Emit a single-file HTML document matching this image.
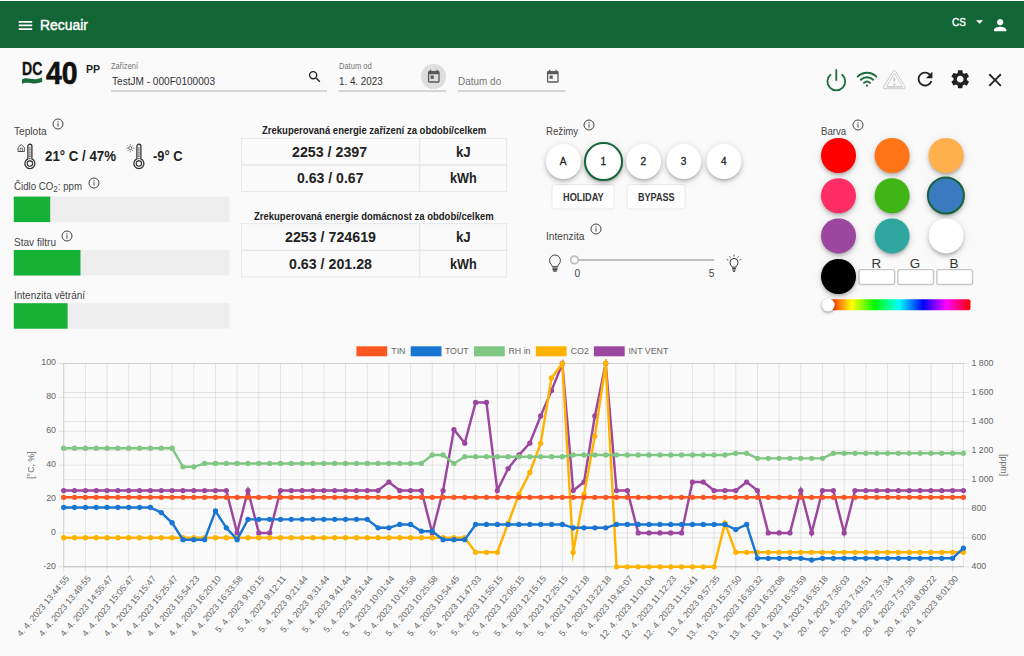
<!DOCTYPE html><html lang="cs"><head><meta charset="utf-8"><title>Recuair</title><style>
html,body{margin:0;padding:0}body{width:1024px;height:656px;overflow:hidden;background:#fafafa;font-family:"Liberation Sans", sans-serif;position:relative}
.t{position:absolute;white-space:pre;line-height:normal;transform-origin:0 50%}
.ic{position:absolute;display:block;overflow:visible}
.abs{position:absolute}
.bar{position:absolute;left:13.8px;width:216px;height:25.6px;background:#eee}
.bar i{position:absolute;left:0;top:0;bottom:0;background:#14b135;display:block}
.cell{position:absolute;border:1px solid #e4e7ea;box-sizing:border-box}
.mode{position:absolute;width:34.6px;height:34.6px;border-radius:50%;background:#fff;box-shadow:0 2px 3px -1px rgba(0,0,0,.2),0 3px 5px 0 rgba(0,0,0,.14),0 1px 9px 0 rgba(0,0,0,.10);box-sizing:border-box}
.btn{position:absolute;height:24.6px;background:#fff;border:1px solid #e6e6e6;border-radius:3px;box-sizing:border-box}
.col{position:absolute;width:34.6px;height:34.6px;border-radius:50%;box-sizing:border-box;box-shadow:0 2px 3px -1px rgba(0,0,0,.2),0 3px 5px 0 rgba(0,0,0,.14),0 1px 9px 0 rgba(0,0,0,.10)}
.inp{position:absolute;top:269.9px;width:35.8px;height:14.4px;background:#fff;border:1px solid #c4c4c4;border-radius:2px;box-sizing:border-box;box-shadow:inset 0 1px 1px rgba(0,0,0,.08)}

</style></head><body>
<svg class="ic" style="left:0;top:0;z-index:0" width="1024" height="340" viewBox="0 0 1024 340"><rect x="111" y="90.3" width="215.9" height="1.45" fill="#c6c6c6"/><rect x="338.3" y="90.3" width="107.9" height="1.45" fill="#c6c6c6"/><rect x="457.9" y="90.3" width="107.8" height="1.45" fill="#c6c6c6"/><rect x="13.8" y="196.6" width="215.9" height="25.5" fill="#eee"/><rect x="13.8" y="196.6" width="36.4" height="25.5" fill="#14b135"/><rect x="13.8" y="250.0" width="215.9" height="25.5" fill="#eee"/><rect x="13.8" y="250.0" width="66.7" height="25.5" fill="#14b135"/><rect x="13.8" y="303.2" width="215.9" height="25.5" fill="#eee"/><rect x="13.8" y="303.2" width="53.8" height="25.5" fill="#14b135"/><rect x="241.5" y="138.40" width="178.2" height="26.6" fill="none" stroke="#e2e6ea" stroke-width="0.9"/><rect x="419.7" y="138.40" width="86.9" height="26.6" fill="none" stroke="#e2e6ea" stroke-width="0.9"/><rect x="241.5" y="165.00" width="178.2" height="26.6" fill="none" stroke="#e2e6ea" stroke-width="0.9"/><rect x="419.7" y="165.00" width="86.9" height="26.6" fill="none" stroke="#e2e6ea" stroke-width="0.9"/><rect x="241.5" y="223.70" width="178.2" height="26.6" fill="none" stroke="#e2e6ea" stroke-width="0.9"/><rect x="419.7" y="223.70" width="86.9" height="26.6" fill="none" stroke="#e2e6ea" stroke-width="0.9"/><rect x="241.5" y="250.30" width="178.2" height="26.6" fill="none" stroke="#e2e6ea" stroke-width="0.9"/><rect x="419.7" y="250.30" width="86.9" height="26.6" fill="none" stroke="#e2e6ea" stroke-width="0.9"/><rect x="552.0" y="184.6" width="62.1" height="24.4" rx="2.8" fill="#fff" stroke="#e9e9e9" stroke-width="1"/><rect x="627.1" y="184.6" width="58.1" height="24.4" rx="2.8" fill="#fff" stroke="#e9e9e9" stroke-width="1"/><rect x="858.95" y="269.65" width="35.70" height="14.90" rx="2" fill="#fff" stroke="#c6c6c6" stroke-width="1.4"/><rect x="897.85" y="269.65" width="35.70" height="14.90" rx="2" fill="#fff" stroke="#c6c6c6" stroke-width="1.4"/><rect x="936.85" y="269.65" width="35.70" height="14.90" rx="2" fill="#fff" stroke="#c6c6c6" stroke-width="1.4"/></svg>
<div class="abs" style="left:0;top:0;width:1024px;height:2px;background:linear-gradient(#f6f8f7 0,#f6f8f7 55%,#126534 100%)"></div>
<header class="abs" style="left:0;top:1px;width:1024px;height:46.6px;background:#126534"></header>
<svg class="ic" style="left:0;top:0" width="40" height="40" viewBox="0 0 40 40"><path d="M18.7 20.9h13.5v1.75h-13.5zM18.7 24.6h13.5v1.75h-13.5zM18.7 28.25h13.5v1.75h-13.5z" fill="#fff"/></svg>
<span class="t" id="recuair" style="left:40.1px;top:15.84px;font-size:15.2px;font-weight:400;color:#fff;transform:scaleX(0.9170);-webkit-text-stroke:0.45px #fff;">Recuair</span>
<span class="t" id="cs" style="left:951.6px;top:15.83px;font-size:10.8px;font-weight:400;color:#fff;transform:scaleX(0.9333);-webkit-text-stroke:0.35px #fff;">CS</span>
<svg class="ic" style="left:970.9px;top:12.9px" width="17.2" height="17.2" viewBox="0 0 24 24"><path d="M7 10l5 5 5-5z" fill="#fff"/></svg>
<svg class="ic" style="left:990.9px;top:16.2px" width="18.4" height="18.4" viewBox="0 0 24 24"><path d="M12 12c2.21 0 4-1.79 4-4s-1.79-4-4-4-4 1.79-4 4 1.79 4 4 4zm0 2c-2.67 0-8 1.34-8 4v2h16v-2c0-2.66-5.33-4-8-4z" fill="#fff"/></svg>
<span class="t" id="dc" style="left:21.6px;top:58.67px;font-size:17.6px;font-weight:700;color:#111;transform:scaleX(0.8025);-webkit-text-stroke:0.3px #111;">DC</span>
<svg class="ic" style="left:21.8px;top:76.9px" width="20.2" height="7.6" viewBox="0 0 21 7" preserveAspectRatio="none"><path d="M0 2.2C3 0.6 6 1.4 10 1.9C14 2.4 17 1.6 21 0.4V4.6C17 5.6 14 6.2 10 5.7C6 5.2 3 5 0 6.4Z" fill="#1a6b3a"/></svg>
<span class="t" id="n40" style="left:46.2px;top:55.91px;font-size:30.6px;font-weight:700;color:#111;transform:scaleX(0.9286);-webkit-text-stroke:0.6px #111;">40</span>
<span class="t" id="pp" style="left:85.6px;top:62.68px;font-size:11.4px;font-weight:700;color:#222;transform:scaleX(0.9209);">PP</span>
<span class="t" id="lzar" style="left:111px;top:61.04px;font-size:8.8px;font-weight:400;color:#757575;transform:scaleX(0.8364);">Zařízení</span>
<span class="t" id="dev" style="left:111.5px;top:74.86px;font-size:11.2px;font-weight:400;color:#333;transform:scaleX(0.9001);">TestJM - 000F0100003</span>
<svg class="ic" style="left:306.8px;top:68.8px" width="15.6" height="15.6" viewBox="0 0 24 24"><path d="M15.5 14h-.79l-.28-.27C15.41 12.59 16 11.11 16 9.5 16 5.91 13.09 3 9.5 3S3 5.91 3 9.5 5.91 16 9.5 16c1.61 0 3.09-.59 4.23-1.57l.27.28v.79l5 4.99L20.49 19l-4.99-5zm-6 0C7.01 14 5 11.99 5 9.5S7.01 5 9.5 5 14 7.01 14 9.5 11.99 14 9.5 14z" fill="#222"/></svg>
<span class="t" id="ldod" style="left:338.6px;top:61.04px;font-size:8.8px;font-weight:400;color:#757575;transform:scaleX(0.8547);">Datum od</span>
<span class="t" id="dod" style="left:339px;top:74.86px;font-size:11.2px;font-weight:400;color:#333;transform:scaleX(0.8761);">1. 4. 2023</span>
<div class="abs" style="left:421px;top:64.1px;width:24.6px;height:24.6px;border-radius:50%;background:#dedede"></div>
<svg class="ic" style="left:425.8px;top:69.2px" width="15.6" height="15.6" viewBox="0 0 24 24"><path d="M19 3h-1V1h-2v2H8V1H6v2H5c-1.11 0-1.99.9-1.99 2L3 19c0 1.1.89 2 2 2h14c1.1 0 2-.9 2-2V5c0-1.1-.9-2-2-2zm0 16H5V8h14v11zM7 10h5v5H7z" fill="#5a5a5a"/></svg>
<span class="t" id="ddo" style="left:458px;top:74.86px;font-size:11.2px;font-weight:400;color:#757575;transform:scaleX(0.8904);">Datum do</span>
<svg class="ic" style="left:545.4px;top:69.2px" width="15.6" height="15.6" viewBox="0 0 24 24"><path d="M19 3h-1V1h-2v2H8V1H6v2H5c-1.11 0-1.99.9-1.99 2L3 19c0 1.1.89 2 2 2h14c1.1 0 2-.9 2-2V5c0-1.1-.9-2-2-2zm0 16H5V8h14v11zM7 10h5v5H7z" fill="#5a5a5a"/></svg>
<svg class="ic" style="left:825px;top:68px" width="22" height="24" viewBox="0 0 22 24"><path d="M5.46 6.73A8.9 8.9 0 1 0 17.14 6.73" fill="none" stroke="#1d6d3b" stroke-width="1.8" stroke-linecap="round"/><path d="M11.3 1.9V12" stroke="#1d6d3b" stroke-width="1.8" stroke-linecap="round"/></svg>
<svg class="ic" style="left:856.3px;top:70.3px" width="22" height="18" viewBox="0 0 22 18"><g fill="none" stroke="#1d6d3b" stroke-width="1.9" stroke-linecap="round"><path d="M1.6 6.6C7 1.4 15 1.4 20.4 6.6"/><path d="M4.8 9.8C8.4 6.4 13.6 6.4 17.2 9.8"/><path d="M8 12.9C9.8 11.3 12.2 11.3 14 12.9"/></g><circle cx="11" cy="15.6" r="1.1" fill="#1d6d3b"/></svg>
<svg class="ic" style="left:882px;top:69.9px" width="24" height="20" viewBox="0 0 24 20"><path d="M12.4 2.3L21.6 17.2H3.0Z" fill="none" stroke="#c4c4c4" stroke-width="3.9" stroke-linejoin="round"/><path d="M12.4 2.3L21.6 17.2H3.0Z" fill="#fafafa" stroke="#fafafa" stroke-width="2.3" stroke-linejoin="round"/><path d="M4.6 17.6H20.2" stroke="#dedede" stroke-width="1.7"/><path d="M12.4 3.3L20.2 16.6H4.5Z" fill="none" stroke="#c6c6c6" stroke-width="0.85" stroke-linejoin="round"/><ellipse cx="12.35" cy="9.6" rx="1.15" ry="2.4" fill="#cdcdcd"/><circle cx="12.4" cy="14.4" r="1.2" fill="#cdcdcd"/></svg>
<svg class="ic" style="left:914.2px;top:68.2px" width="22.1" height="22.1" viewBox="0 0 24 24"><path d="M17.65 6.35C16.2 4.9 14.21 4 12 4c-4.42 0-7.99 3.58-7.99 8s3.57 8 7.99 8c3.73 0 6.84-2.55 7.73-6h-2.08c-.82 2.33-3.04 4-5.65 4-3.31 0-6-2.69-6-6s2.69-6 6-6c1.66 0 3.14.69 4.22 1.78L13 11h7V4l-2.35 2.35z" fill="#222"/></svg>
<svg class="ic" style="left:948.5px;top:68.2px" width="22.4" height="22.4" viewBox="0 0 24 24"><path d="M19.14 12.94c.04-.3.06-.61.06-.94 0-.32-.02-.64-.07-.94l2.03-1.58c.18-.14.23-.41.12-.61l-1.92-3.32c-.12-.22-.37-.29-.59-.22l-2.39.96c-.5-.38-1.03-.7-1.62-.94l-.36-2.54c-.04-.24-.24-.41-.48-.41h-3.84c-.24 0-.43.17-.47.41l-.36 2.54c-.59.24-1.13.57-1.62.94l-2.39-.96c-.22-.08-.47 0-.59.22L2.74 8.87c-.12.21-.08.47.12.61l2.03 1.58c-.05.3-.09.63-.09.94s.02.64.07.94l-2.03 1.58c-.18.14-.23.41-.12.61l1.92 3.32c.12.22.37.29.59.22l2.39-.96c.5.38 1.03.7 1.62.94l.36 2.54c.05.24.24.41.48.41h3.84c.24 0 .44-.17.47-.41l.36-2.54c.59-.24 1.13-.56 1.62-.94l2.39.96c.22.08.47 0 .59-.22l1.92-3.32c.12-.22.07-.47-.12-.61l-2.01-1.58zM12 15.6c-1.98 0-3.6-1.62-3.6-3.6s1.62-3.6 3.6-3.6 3.6 1.62 3.6 3.6-1.62 3.6-3.6 3.6z" fill="#222"/></svg>
<svg class="ic" style="left:983.5px;top:68.7px" width="22.1" height="22.1" viewBox="0 0 24 24"><path d="M19 6.41L17.59 5 12 10.59 6.41 5 5 6.41 10.59 12 5 17.59 6.41 19 12 13.41 17.59 19 19 17.59 13.41 12z" fill="#222"/></svg>
<span class="t" id="teplota" style="left:14.4px;top:124.56px;font-size:11.2px;font-weight:400;color:#444;transform:scaleX(0.9036);">Teplota</span>
<svg class="ic" style="left:51.20px;top:117.35px" width="14" height="14" viewBox="0 0 14 14"><circle cx="7" cy="7" r="5" fill="none" stroke="#3a3a3a" stroke-width="0.95"/><rect x="6.55" y="6.2" width="0.9" height="3.4" fill="#333"/><rect x="6.5" y="4.3" width="1" height="1.1" fill="#333"/></svg>
<svg class="ic" style="left:16.7px;top:143.2px" width="20" height="27" viewBox="0 0 20 27"><path d="M10.9 3.25a2 2 0 0 1 4 0V15.97a5 5 0 1 1 -4 0Z" fill="none" stroke="#333" stroke-width="1.3"/><circle cx="12.9" cy="20.55" r="2.7" fill="none" stroke="#333" stroke-width="1.1"/><path d="M12.9 4.2V18" stroke="#444" stroke-width="1.3" stroke-dasharray="1.3 0.8"/><path d="M1 8.5V4.4L4.2 1.6L7.4 4.4V8.5Z" fill="none" stroke="#444" stroke-width="0.9"/><rect x="3.1" y="5.2" width="2.2" height="3.3" fill="none" stroke="#444" stroke-width="0.7"/></svg>
<span class="t" id="t1" style="left:45px;top:146.96px;font-size:15.4px;font-weight:700;color:#222;transform:scaleX(0.8627);">21° C / 47%</span>
<svg class="ic" style="left:125.8px;top:143.2px" width="20" height="27" viewBox="0 0 20 27"><path d="M10.9 3.25a2 2 0 0 1 4 0V15.97a5 5 0 1 1 -4 0Z" fill="none" stroke="#333" stroke-width="1.3"/><circle cx="12.9" cy="20.55" r="2.7" fill="none" stroke="#333" stroke-width="1.1"/><path d="M12.9 4.2V18" stroke="#444" stroke-width="1.3" stroke-dasharray="1.3 0.8"/><circle cx="4.3" cy="5.2" r="1.6" fill="none" stroke="#444" stroke-width="0.8"/><line x1="6.90" y1="5.20" x2="8.40" y2="5.20" stroke="#444" stroke-width="0.7"/><line x1="6.14" y1="7.04" x2="7.20" y2="8.10" stroke="#444" stroke-width="0.7"/><line x1="4.30" y1="7.80" x2="4.30" y2="9.30" stroke="#444" stroke-width="0.7"/><line x1="2.46" y1="7.04" x2="1.40" y2="8.10" stroke="#444" stroke-width="0.7"/><line x1="1.70" y1="5.20" x2="0.20" y2="5.20" stroke="#444" stroke-width="0.7"/><line x1="2.46" y1="3.36" x2="1.40" y2="2.30" stroke="#444" stroke-width="0.7"/><line x1="4.30" y1="2.60" x2="4.30" y2="1.10" stroke="#444" stroke-width="0.7"/><line x1="6.14" y1="3.36" x2="7.20" y2="2.30" stroke="#444" stroke-width="0.7"/></svg>
<span class="t" id="t2" style="left:152.8px;top:146.96px;font-size:15.4px;font-weight:700;color:#222;transform:scaleX(0.8373);">-9° C</span>
<span class="t" id="co2" style="left:14.2px;top:179.56px;font-size:11.2px;font-weight:400;color:#444;transform:scaleX(0.8652);">Čidlo CO<span style="font-size:9.4px;position:relative;top:2.6px">2</span>: ppm</span>
<svg class="ic" style="left:86.50px;top:175.60px" width="14" height="14" viewBox="0 0 14 14"><circle cx="7" cy="7" r="5" fill="none" stroke="#3a3a3a" stroke-width="0.95"/><rect x="6.55" y="6.2" width="0.9" height="3.4" fill="#333"/><rect x="6.5" y="4.3" width="1" height="1.1" fill="#333"/></svg>
<span class="t" id="filtr" style="left:14.2px;top:236.26px;font-size:11.2px;font-weight:400;color:#444;transform:scaleX(0.9005);">Stav filtru</span>
<svg class="ic" style="left:60.30px;top:228.85px" width="14" height="14" viewBox="0 0 14 14"><circle cx="7" cy="7" r="5" fill="none" stroke="#3a3a3a" stroke-width="0.95"/><rect x="6.55" y="6.2" width="0.9" height="3.4" fill="#333"/><rect x="6.5" y="4.3" width="1" height="1.1" fill="#333"/></svg>
<span class="t" id="vetr" style="left:14.2px;top:289.46px;font-size:11.2px;font-weight:400;color:#444;transform:scaleX(0.8919);">Intenzita větrání</span>
<span class="t" id="tacap" style="left:261.8px;top:125.27px;font-size:10.2px;font-weight:700;color:#222;transform:scaleX(0.9339);">Zrekuperovaná energie zařízení za období/celkem</span><span class="t" id="tav0" style="left:292.4px;top:143.52px;font-size:13.9px;font-weight:700;color:#222;transform:scaleX(1.0247);">2253 / 2397</span><span class="t" id="tau0" style="left:456px;top:143.52px;font-size:13.9px;font-weight:700;color:#222;transform:scaleX(0.9513);">kJ</span><span class="t" id="tav1" style="left:296.5px;top:170.12px;font-size:13.9px;font-weight:700;color:#222;transform:scaleX(1.0129);">0.63 / 0.67</span><span class="t" id="tau1" style="left:449.7px;top:170.12px;font-size:13.9px;font-weight:700;color:#222;transform:scaleX(0.9138);">kWh</span>
<span class="t" id="tbcap" style="left:254px;top:210.57px;font-size:10.2px;font-weight:700;color:#222;transform:scaleX(0.9326);">Zrekuperovaná energie domácnost za období/celkem</span><span class="t" id="tbv0" style="left:284.5px;top:229.22px;font-size:13.9px;font-weight:700;color:#222;transform:scaleX(1.0243);">2253 / 724619</span><span class="t" id="tbu0" style="left:456px;top:229.22px;font-size:13.9px;font-weight:700;color:#222;transform:scaleX(0.9513);">kJ</span><span class="t" id="tbv1" style="left:288.5px;top:255.82px;font-size:13.9px;font-weight:700;color:#222;transform:scaleX(1.0233);">0.63 / 201.28</span><span class="t" id="tbu1" style="left:449.7px;top:255.82px;font-size:13.9px;font-weight:700;color:#222;transform:scaleX(0.9138);">kWh</span>
<span class="t" id="rezimy" style="left:545.9px;top:124.56px;font-size:11.2px;font-weight:400;color:#444;transform:scaleX(0.8633);">Režimy</span>
<svg class="ic" style="left:582.40px;top:117.50px" width="14" height="14" viewBox="0 0 14 14"><circle cx="7" cy="7" r="5" fill="none" stroke="#3a3a3a" stroke-width="0.95"/><rect x="6.55" y="6.2" width="0.9" height="3.4" fill="#333"/><rect x="6.5" y="4.3" width="1" height="1.1" fill="#333"/></svg>
<div class="mode" style="left:0;top:0;transform:translate(545.9px,144.1px)"></div>
<span class="t" id="mA" style="left:563.2px;top:155.76px;font-size:10.1px;font-weight:400;color:#222;-webkit-text-stroke:0.3px #222;transform:translateX(-50%);">A</span>
<div class="mode" style="left:0;top:0;transform:translate(584.0px,142.1px);width:38.6px;height:38.6px;border:2.8px solid #17633a"></div>
<span class="t" id="m1" style="left:603.3px;top:155.76px;font-size:10.1px;font-weight:400;color:#222;-webkit-text-stroke:0.3px #222;transform:translateX(-50%);">1</span>
<div class="mode" style="left:0;top:0;transform:translate(626.1px,144.1px)"></div>
<span class="t" id="m2" style="left:643.4px;top:155.76px;font-size:10.1px;font-weight:400;color:#222;-webkit-text-stroke:0.3px #222;transform:translateX(-50%);">2</span>
<div class="mode" style="left:0;top:0;transform:translate(666.3px,144.1px)"></div>
<span class="t" id="m3" style="left:683.6px;top:155.76px;font-size:10.1px;font-weight:400;color:#222;-webkit-text-stroke:0.3px #222;transform:translateX(-50%);">3</span>
<div class="mode" style="left:0;top:0;transform:translate(706.5px,144.1px)"></div>
<span class="t" id="m4" style="left:723.8px;top:155.76px;font-size:10.1px;font-weight:400;color:#222;-webkit-text-stroke:0.3px #222;transform:translateX(-50%);">4</span>
<span class="t" id="hol" style="left:563px;top:191.21px;font-size:10.6px;font-weight:700;color:#333;transform:scaleX(0.8693);">HOLIDAY</span>
<span class="t" id="byp" style="left:638px;top:191.21px;font-size:10.6px;font-weight:700;color:#333;transform:scaleX(0.8555);">BYPASS</span>
<span class="t" id="intenz" style="left:545.9px;top:229.94px;font-size:11.0px;font-weight:400;color:#444;transform:scaleX(0.9232);">Intenzita</span>
<svg class="ic" style="left:588.75px;top:222.40px" width="14" height="14" viewBox="0 0 14 14"><circle cx="7" cy="7" r="5" fill="none" stroke="#3a3a3a" stroke-width="0.95"/><rect x="6.55" y="6.2" width="0.9" height="3.4" fill="#333"/><rect x="6.5" y="4.3" width="1" height="1.1" fill="#333"/></svg>
<svg class="ic" style="left:545.7px;top:252.6px" width="18" height="20" viewBox="0 0 18 20"><path d="M6.2 13.6C6.2 11.8 3.6 10.6 3.6 7.4a5.4 5.4 0 0 1 10.8 0c0 3.2 -2.6 4.4 -2.6 6.2Z" fill="none" stroke="#444" stroke-width="1"/><path d="M6.3 15.2h5.4M6.5 16.7h5M7.3 18.2h3.4" stroke="#444" stroke-width="1.25"/></svg>
<div class="abs" style="left:574.2px;top:258.9px;width:139.6px;height:1.8px;background:#bdbdbd"></div>
<svg class="ic" style="left:564px;top:250px" width="20" height="20" viewBox="0 0 20 20"><circle cx="10.4" cy="9.9" r="3.8" fill="#fafafa" stroke="#bdbdbd" stroke-width="1.7"/></svg>
<span class="t" id="s0" style="left:574.6px;top:268.07px;font-size:10.2px;font-weight:400;color:#444;">0</span>
<span class="t" id="s5" style="left:708.8px;top:268.07px;font-size:10.2px;font-weight:400;color:#444;">5</span>
<svg class="ic" style="left:725.4px;top:252.6px" width="18" height="20" viewBox="0 0 18 20"><path d="M7 14.2C7 12.8 5 11.9 5 9.4a4 4 0 0 1 8 0c0 2.5 -2 3.4 -2 4.8Z" fill="none" stroke="#333" stroke-width="1"/><path d="M7.1 15.6h3.8M7.3 17h3.4M7.9 18.3h2.2" stroke="#333" stroke-width="1"/><path d="M9 3.6V1.6M5.5 4.8L4.4 3.2M12.5 4.8L13.6 3.2M3.4 7.3L1.7 6.4M14.6 7.3L16.3 6.4" stroke="#333" stroke-width="0.8"/></svg>
<span class="t" id="barva" style="left:821.2px;top:124.86px;font-size:11.2px;font-weight:400;color:#444;transform:scaleX(0.8620);">Barva</span>
<svg class="ic" style="left:850.60px;top:117.70px" width="14" height="14" viewBox="0 0 14 14"><circle cx="7" cy="7" r="5" fill="none" stroke="#3a3a3a" stroke-width="0.95"/><rect x="6.55" y="6.2" width="0.9" height="3.4" fill="#333"/><rect x="6.5" y="4.3" width="1" height="1.1" fill="#333"/></svg>
<div class="col" style="left:0;top:0;transform:translate(821.0px,138.0px);background:#ff0000"></div>
<div class="col" style="left:0;top:0;transform:translate(874.6px,138.0px);background:#ff7416"></div>
<div class="col" style="left:0;top:0;transform:translate(928.6px,138.0px);background:#ffb04d"></div>
<div class="col" style="left:0;top:0;transform:translate(821.0px,178.2px);background:#ff2d66"></div>
<div class="col" style="left:0;top:0;transform:translate(874.6px,178.2px);background:#3fb616"></div>
<div class="col" style="left:0;top:0;transform:translate(926.9px,176.5px);width:38px;height:38px;background:#3a7bc0;border:2.4px solid #17633a"></div>
<div class="col" style="left:0;top:0;transform:translate(821.0px,218.4px);background:#9b479f"></div>
<div class="col" style="left:0;top:0;transform:translate(874.6px,218.4px);background:#2fa79f"></div>
<div class="col" style="left:0;top:0;transform:translate(928.6px,218.4px);background:#ffffff"></div>
<div class="col" style="left:0;top:0;transform:translate(821.0px,259.0px);background:#000"></div>
<span class="t" id="lR" style="left:871.6px;top:256.27px;font-size:13.4px;font-weight:400;color:#333;">R</span>
<span class="t" id="lG" style="left:909.8px;top:256.27px;font-size:13.4px;font-weight:400;color:#333;">G</span>
<span class="t" id="lB" style="left:949.6px;top:256.27px;font-size:13.4px;font-weight:400;color:#333;">B</span>
<div class="abs" style="left:0;top:0;transform:translate(827.5px,299.3px);width:143.4px;height:11.3px;border-radius:2px;background:linear-gradient(to right,#f00 0%,#ff0 17%,#0f0 33%,#0ff 50%,#00f 67%,#f0f 83%,#f00 100%)"></div>
<div class="abs" style="left:0;top:0;transform:translate(821.7px,298.6px);width:13.2px;height:13.2px;border-radius:50%;background:#fff;box-shadow:0 1px 3px rgba(0,0,0,.45)"></div>
<svg class="chart" width="1024" height="321" viewBox="0 335 1024 321" style="position:absolute;left:0;top:335px" font-family="Liberation Sans, sans-serif">
<line x1="63.70" y1="363.5" x2="63.70" y2="572.30" stroke="rgba(0,0,0,0.1)" stroke-width="0.9"/>
<line x1="85.38" y1="363.5" x2="85.38" y2="572.30" stroke="rgba(0,0,0,0.1)" stroke-width="0.9"/>
<line x1="107.06" y1="363.5" x2="107.06" y2="572.30" stroke="rgba(0,0,0,0.1)" stroke-width="0.9"/>
<line x1="128.74" y1="363.5" x2="128.74" y2="572.30" stroke="rgba(0,0,0,0.1)" stroke-width="0.9"/>
<line x1="150.42" y1="363.5" x2="150.42" y2="572.30" stroke="rgba(0,0,0,0.1)" stroke-width="0.9"/>
<line x1="172.10" y1="363.5" x2="172.10" y2="572.30" stroke="rgba(0,0,0,0.1)" stroke-width="0.9"/>
<line x1="193.78" y1="363.5" x2="193.78" y2="572.30" stroke="rgba(0,0,0,0.1)" stroke-width="0.9"/>
<line x1="215.46" y1="363.5" x2="215.46" y2="572.30" stroke="rgba(0,0,0,0.1)" stroke-width="0.9"/>
<line x1="237.14" y1="363.5" x2="237.14" y2="572.30" stroke="rgba(0,0,0,0.1)" stroke-width="0.9"/>
<line x1="258.82" y1="363.5" x2="258.82" y2="572.30" stroke="rgba(0,0,0,0.1)" stroke-width="0.9"/>
<line x1="280.50" y1="363.5" x2="280.50" y2="572.30" stroke="rgba(0,0,0,0.1)" stroke-width="0.9"/>
<line x1="302.18" y1="363.5" x2="302.18" y2="572.30" stroke="rgba(0,0,0,0.1)" stroke-width="0.9"/>
<line x1="323.86" y1="363.5" x2="323.86" y2="572.30" stroke="rgba(0,0,0,0.1)" stroke-width="0.9"/>
<line x1="345.54" y1="363.5" x2="345.54" y2="572.30" stroke="rgba(0,0,0,0.1)" stroke-width="0.9"/>
<line x1="367.22" y1="363.5" x2="367.22" y2="572.30" stroke="rgba(0,0,0,0.1)" stroke-width="0.9"/>
<line x1="388.90" y1="363.5" x2="388.90" y2="572.30" stroke="rgba(0,0,0,0.1)" stroke-width="0.9"/>
<line x1="410.58" y1="363.5" x2="410.58" y2="572.30" stroke="rgba(0,0,0,0.1)" stroke-width="0.9"/>
<line x1="432.26" y1="363.5" x2="432.26" y2="572.30" stroke="rgba(0,0,0,0.1)" stroke-width="0.9"/>
<line x1="453.94" y1="363.5" x2="453.94" y2="572.30" stroke="rgba(0,0,0,0.1)" stroke-width="0.9"/>
<line x1="475.62" y1="363.5" x2="475.62" y2="572.30" stroke="rgba(0,0,0,0.1)" stroke-width="0.9"/>
<line x1="497.30" y1="363.5" x2="497.30" y2="572.30" stroke="rgba(0,0,0,0.1)" stroke-width="0.9"/>
<line x1="518.98" y1="363.5" x2="518.98" y2="572.30" stroke="rgba(0,0,0,0.1)" stroke-width="0.9"/>
<line x1="540.66" y1="363.5" x2="540.66" y2="572.30" stroke="rgba(0,0,0,0.1)" stroke-width="0.9"/>
<line x1="562.34" y1="363.5" x2="562.34" y2="572.30" stroke="rgba(0,0,0,0.1)" stroke-width="0.9"/>
<line x1="584.02" y1="363.5" x2="584.02" y2="572.30" stroke="rgba(0,0,0,0.1)" stroke-width="0.9"/>
<line x1="605.70" y1="363.5" x2="605.70" y2="572.30" stroke="rgba(0,0,0,0.1)" stroke-width="0.9"/>
<line x1="627.38" y1="363.5" x2="627.38" y2="572.30" stroke="rgba(0,0,0,0.1)" stroke-width="0.9"/>
<line x1="649.06" y1="363.5" x2="649.06" y2="572.30" stroke="rgba(0,0,0,0.1)" stroke-width="0.9"/>
<line x1="670.74" y1="363.5" x2="670.74" y2="572.30" stroke="rgba(0,0,0,0.1)" stroke-width="0.9"/>
<line x1="692.42" y1="363.5" x2="692.42" y2="572.30" stroke="rgba(0,0,0,0.1)" stroke-width="0.9"/>
<line x1="714.10" y1="363.5" x2="714.10" y2="572.30" stroke="rgba(0,0,0,0.1)" stroke-width="0.9"/>
<line x1="735.78" y1="363.5" x2="735.78" y2="572.30" stroke="rgba(0,0,0,0.1)" stroke-width="0.9"/>
<line x1="757.46" y1="363.5" x2="757.46" y2="572.30" stroke="rgba(0,0,0,0.1)" stroke-width="0.9"/>
<line x1="779.14" y1="363.5" x2="779.14" y2="572.30" stroke="rgba(0,0,0,0.1)" stroke-width="0.9"/>
<line x1="800.82" y1="363.5" x2="800.82" y2="572.30" stroke="rgba(0,0,0,0.1)" stroke-width="0.9"/>
<line x1="822.50" y1="363.5" x2="822.50" y2="572.30" stroke="rgba(0,0,0,0.1)" stroke-width="0.9"/>
<line x1="844.18" y1="363.5" x2="844.18" y2="572.30" stroke="rgba(0,0,0,0.1)" stroke-width="0.9"/>
<line x1="865.86" y1="363.5" x2="865.86" y2="572.30" stroke="rgba(0,0,0,0.1)" stroke-width="0.9"/>
<line x1="887.54" y1="363.5" x2="887.54" y2="572.30" stroke="rgba(0,0,0,0.1)" stroke-width="0.9"/>
<line x1="909.22" y1="363.5" x2="909.22" y2="572.30" stroke="rgba(0,0,0,0.1)" stroke-width="0.9"/>
<line x1="930.90" y1="363.5" x2="930.90" y2="572.30" stroke="rgba(0,0,0,0.1)" stroke-width="0.9"/>
<line x1="952.58" y1="363.5" x2="952.58" y2="572.30" stroke="rgba(0,0,0,0.1)" stroke-width="0.9"/>
<line x1="963.42" y1="363.5" x2="963.42" y2="566.8" stroke="rgba(0,0,0,0.1)" stroke-width="0.9"/>
<line x1="63.70" y1="363.5" x2="63.70" y2="566.8" stroke="rgba(0,0,0,0.1)" stroke-width="0.9"/>
<line x1="63.70" y1="566.8" x2="963.42" y2="566.8" stroke="rgba(0,0,0,0.1)" stroke-width="0.9"/>
<line x1="58.20" y1="566.80" x2="963.42" y2="566.80" stroke="rgba(0,0,0,0.1)" stroke-width="0.9"/>
<text x="56" y="568.70" font-size="8.8" fill="#666" text-anchor="end">-20</text>
<line x1="58.20" y1="532.92" x2="963.42" y2="532.92" stroke="rgba(0,0,0,0.1)" stroke-width="0.9"/>
<text x="56" y="534.82" font-size="8.8" fill="#666" text-anchor="end">0</text>
<line x1="58.20" y1="499.03" x2="963.42" y2="499.03" stroke="rgba(0,0,0,0.1)" stroke-width="0.9"/>
<text x="56" y="500.93" font-size="8.8" fill="#666" text-anchor="end">20</text>
<line x1="58.20" y1="465.15" x2="963.42" y2="465.15" stroke="rgba(0,0,0,0.1)" stroke-width="0.9"/>
<text x="56" y="467.05" font-size="8.8" fill="#666" text-anchor="end">40</text>
<line x1="58.20" y1="431.27" x2="963.42" y2="431.27" stroke="rgba(0,0,0,0.1)" stroke-width="0.9"/>
<text x="56" y="433.17" font-size="8.8" fill="#666" text-anchor="end">60</text>
<line x1="58.20" y1="397.38" x2="963.42" y2="397.38" stroke="rgba(0,0,0,0.1)" stroke-width="0.9"/>
<text x="56" y="399.28" font-size="8.8" fill="#666" text-anchor="end">80</text>
<line x1="58.20" y1="363.50" x2="963.42" y2="363.50" stroke="rgba(0,0,0,0.1)" stroke-width="0.9"/>
<text x="56" y="365.40" font-size="8.8" fill="#666" text-anchor="end">100</text>
<line x1="63.70" y1="566.80" x2="968.92" y2="566.80" stroke="rgba(0,0,0,0.1)" stroke-width="0.9"/>
<text x="971.5" y="569.30" font-size="8.8" fill="#666">400</text>
<line x1="63.70" y1="537.76" x2="968.92" y2="537.76" stroke="rgba(0,0,0,0.1)" stroke-width="0.9"/>
<text x="971.5" y="540.26" font-size="8.8" fill="#666">600</text>
<line x1="63.70" y1="508.71" x2="968.92" y2="508.71" stroke="rgba(0,0,0,0.1)" stroke-width="0.9"/>
<text x="971.5" y="511.21" font-size="8.8" fill="#666">800</text>
<line x1="63.70" y1="479.67" x2="968.92" y2="479.67" stroke="rgba(0,0,0,0.1)" stroke-width="0.9"/>
<text x="971.5" y="482.17" font-size="8.8" fill="#666">1 000</text>
<line x1="63.70" y1="450.63" x2="968.92" y2="450.63" stroke="rgba(0,0,0,0.1)" stroke-width="0.9"/>
<text x="971.5" y="453.13" font-size="8.8" fill="#666">1 200</text>
<line x1="63.70" y1="421.59" x2="968.92" y2="421.59" stroke="rgba(0,0,0,0.1)" stroke-width="0.9"/>
<text x="971.5" y="424.09" font-size="8.8" fill="#666">1 400</text>
<line x1="63.70" y1="392.54" x2="968.92" y2="392.54" stroke="rgba(0,0,0,0.1)" stroke-width="0.9"/>
<text x="971.5" y="395.04" font-size="8.8" fill="#666">1 600</text>
<line x1="63.70" y1="363.50" x2="968.92" y2="363.50" stroke="rgba(0,0,0,0.1)" stroke-width="0.9"/>
<text x="971.5" y="366.00" font-size="8.8" fill="#666">1 800</text>
<text transform="translate(33.6,465.1) rotate(-90)" font-size="8.8" fill="#666" text-anchor="middle">[°C, %]</text>
<text transform="translate(1000.6,465.1) rotate(90)" font-size="8.8" fill="#666" text-anchor="middle">[ppm]</text>
<text transform="translate(69.70,578.80) rotate(-50)" font-size="8.8" fill="#666" text-anchor="end">4. 4. 2023 13:44:55</text>
<text transform="translate(91.38,578.80) rotate(-50)" font-size="8.8" fill="#666" text-anchor="end">4. 4. 2023 13:49:55</text>
<text transform="translate(113.06,578.80) rotate(-50)" font-size="8.8" fill="#666" text-anchor="end">4. 4. 2023 14:55:47</text>
<text transform="translate(134.74,578.80) rotate(-50)" font-size="8.8" fill="#666" text-anchor="end">4. 4. 2023 15:05:47</text>
<text transform="translate(156.42,578.80) rotate(-50)" font-size="8.8" fill="#666" text-anchor="end">4. 4. 2023 15:15:47</text>
<text transform="translate(178.10,578.80) rotate(-50)" font-size="8.8" fill="#666" text-anchor="end">4. 4. 2023 15:25:47</text>
<text transform="translate(199.78,578.80) rotate(-50)" font-size="8.8" fill="#666" text-anchor="end">4. 4. 2023 15:54:23</text>
<text transform="translate(221.46,578.80) rotate(-50)" font-size="8.8" fill="#666" text-anchor="end">4. 4. 2023 16:20:10</text>
<text transform="translate(243.14,578.80) rotate(-50)" font-size="8.8" fill="#666" text-anchor="end">4. 4. 2023 16:33:58</text>
<text transform="translate(264.82,578.80) rotate(-50)" font-size="8.8" fill="#666" text-anchor="end">5. 4. 2023 9:10:15</text>
<text transform="translate(286.50,578.80) rotate(-50)" font-size="8.8" fill="#666" text-anchor="end">5. 4. 2023 9:12:11</text>
<text transform="translate(308.18,578.80) rotate(-50)" font-size="8.8" fill="#666" text-anchor="end">5. 4. 2023 9:21:44</text>
<text transform="translate(329.86,578.80) rotate(-50)" font-size="8.8" fill="#666" text-anchor="end">5. 4. 2023 9:31:44</text>
<text transform="translate(351.54,578.80) rotate(-50)" font-size="8.8" fill="#666" text-anchor="end">5. 4. 2023 9:41:44</text>
<text transform="translate(373.22,578.80) rotate(-50)" font-size="8.8" fill="#666" text-anchor="end">5. 4. 2023 9:51:44</text>
<text transform="translate(394.90,578.80) rotate(-50)" font-size="8.8" fill="#666" text-anchor="end">5. 4. 2023 10:01:44</text>
<text transform="translate(416.58,578.80) rotate(-50)" font-size="8.8" fill="#666" text-anchor="end">5. 4. 2023 10:15:58</text>
<text transform="translate(438.26,578.80) rotate(-50)" font-size="8.8" fill="#666" text-anchor="end">5. 4. 2023 10:25:58</text>
<text transform="translate(459.94,578.80) rotate(-50)" font-size="8.8" fill="#666" text-anchor="end">5. 4. 2023 10:54:45</text>
<text transform="translate(481.62,578.80) rotate(-50)" font-size="8.8" fill="#666" text-anchor="end">5. 4. 2023 11:47:03</text>
<text transform="translate(503.30,578.80) rotate(-50)" font-size="8.8" fill="#666" text-anchor="end">5. 4. 2023 11:55:15</text>
<text transform="translate(524.98,578.80) rotate(-50)" font-size="8.8" fill="#666" text-anchor="end">5. 4. 2023 12:05:15</text>
<text transform="translate(546.66,578.80) rotate(-50)" font-size="8.8" fill="#666" text-anchor="end">5. 4. 2023 12:15:15</text>
<text transform="translate(568.34,578.80) rotate(-50)" font-size="8.8" fill="#666" text-anchor="end">5. 4. 2023 12:25:15</text>
<text transform="translate(590.02,578.80) rotate(-50)" font-size="8.8" fill="#666" text-anchor="end">5. 4. 2023 13:12:18</text>
<text transform="translate(611.70,578.80) rotate(-50)" font-size="8.8" fill="#666" text-anchor="end">5. 4. 2023 13:22:18</text>
<text transform="translate(633.38,578.80) rotate(-50)" font-size="8.8" fill="#666" text-anchor="end">5. 4. 2023 19:43:07</text>
<text transform="translate(655.06,578.80) rotate(-50)" font-size="8.8" fill="#666" text-anchor="end">12. 4. 2023 11:01:04</text>
<text transform="translate(676.74,578.80) rotate(-50)" font-size="8.8" fill="#666" text-anchor="end">12. 4. 2023 11:12:23</text>
<text transform="translate(698.42,578.80) rotate(-50)" font-size="8.8" fill="#666" text-anchor="end">12. 4. 2023 11:15:41</text>
<text transform="translate(720.10,578.80) rotate(-50)" font-size="8.8" fill="#666" text-anchor="end">13. 4. 2023 9:57:35</text>
<text transform="translate(741.78,578.80) rotate(-50)" font-size="8.8" fill="#666" text-anchor="end">13. 4. 2023 15:37:50</text>
<text transform="translate(763.46,578.80) rotate(-50)" font-size="8.8" fill="#666" text-anchor="end">13. 4. 2023 16:30:32</text>
<text transform="translate(785.14,578.80) rotate(-50)" font-size="8.8" fill="#666" text-anchor="end">13. 4. 2023 16:32:08</text>
<text transform="translate(806.82,578.80) rotate(-50)" font-size="8.8" fill="#666" text-anchor="end">13. 4. 2023 16:33:59</text>
<text transform="translate(828.50,578.80) rotate(-50)" font-size="8.8" fill="#666" text-anchor="end">13. 4. 2023 16:35:18</text>
<text transform="translate(850.18,578.80) rotate(-50)" font-size="8.8" fill="#666" text-anchor="end">20. 4. 2023 7:36:03</text>
<text transform="translate(871.86,578.80) rotate(-50)" font-size="8.8" fill="#666" text-anchor="end">20. 4. 2023 7:43:51</text>
<text transform="translate(893.54,578.80) rotate(-50)" font-size="8.8" fill="#666" text-anchor="end">20. 4. 2023 7:57:34</text>
<text transform="translate(915.22,578.80) rotate(-50)" font-size="8.8" fill="#666" text-anchor="end">20. 4. 2023 7:57:58</text>
<text transform="translate(936.90,578.80) rotate(-50)" font-size="8.8" fill="#666" text-anchor="end">20. 4. 2023 8:00:22</text>
<text transform="translate(958.58,578.80) rotate(-50)" font-size="8.8" fill="#666" text-anchor="end">20. 4. 2023 8:01:00</text>
<defs><clipPath id="ca"><rect x="58.7" y="359.3" width="909.7" height="211.7"/></clipPath></defs><g clip-path="url(#ca)">
<polyline points="63.70,490.56 74.54,490.56 85.38,490.56 96.22,490.56 107.06,490.56 117.90,490.56 128.74,490.56 139.58,490.56 150.42,490.56 161.26,490.56 172.10,490.56 182.94,490.56 193.78,490.56 204.62,490.56 215.46,490.56 226.30,490.56 237.14,532.92 247.98,490.56 258.82,532.92 269.66,532.92 280.50,490.56 291.34,490.56 302.18,490.56 313.02,490.56 323.86,490.56 334.70,490.56 345.54,490.56 356.38,490.56 367.22,490.56 378.06,490.56 388.90,482.09 399.74,490.56 410.58,490.56 421.42,490.56 432.26,532.92 443.10,490.56 453.94,429.57 464.78,443.13 475.62,402.47 486.46,402.47 497.30,490.56 508.14,468.54 518.98,454.99 529.82,443.13 540.66,416.02 551.50,390.61 562.34,363.50 573.18,490.56 584.02,482.09 594.86,416.02 605.70,363.50 616.54,490.56 627.38,490.56 638.22,532.92 649.06,532.92 659.90,532.92 670.74,532.92 681.58,532.92 692.42,482.09 703.26,482.09 714.10,490.56 724.94,490.56 735.78,490.56 746.62,482.09 757.46,490.56 768.30,532.92 779.14,532.92 789.98,532.92 800.82,490.56 811.66,532.92 822.50,490.56 833.34,490.56 844.18,532.92 855.02,490.56 865.86,490.56 876.70,490.56 887.54,490.56 898.38,490.56 909.22,490.56 920.06,490.56 930.90,490.56 941.74,490.56 952.58,490.56 963.42,490.56" fill="none" stroke="#9c479f" stroke-width="2.45" stroke-linejoin="miter" stroke-miterlimit="10"/>
<g fill="#9c479f"><circle cx="63.70" cy="490.56" r="2.65"/><circle cx="74.54" cy="490.56" r="2.65"/><circle cx="85.38" cy="490.56" r="2.65"/><circle cx="96.22" cy="490.56" r="2.65"/><circle cx="107.06" cy="490.56" r="2.65"/><circle cx="117.90" cy="490.56" r="2.65"/><circle cx="128.74" cy="490.56" r="2.65"/><circle cx="139.58" cy="490.56" r="2.65"/><circle cx="150.42" cy="490.56" r="2.65"/><circle cx="161.26" cy="490.56" r="2.65"/><circle cx="172.10" cy="490.56" r="2.65"/><circle cx="182.94" cy="490.56" r="2.65"/><circle cx="193.78" cy="490.56" r="2.65"/><circle cx="204.62" cy="490.56" r="2.65"/><circle cx="215.46" cy="490.56" r="2.65"/><circle cx="226.30" cy="490.56" r="2.65"/><circle cx="237.14" cy="532.92" r="2.65"/><circle cx="247.98" cy="490.56" r="2.65"/><circle cx="258.82" cy="532.92" r="2.65"/><circle cx="269.66" cy="532.92" r="2.65"/><circle cx="280.50" cy="490.56" r="2.65"/><circle cx="291.34" cy="490.56" r="2.65"/><circle cx="302.18" cy="490.56" r="2.65"/><circle cx="313.02" cy="490.56" r="2.65"/><circle cx="323.86" cy="490.56" r="2.65"/><circle cx="334.70" cy="490.56" r="2.65"/><circle cx="345.54" cy="490.56" r="2.65"/><circle cx="356.38" cy="490.56" r="2.65"/><circle cx="367.22" cy="490.56" r="2.65"/><circle cx="378.06" cy="490.56" r="2.65"/><circle cx="388.90" cy="482.09" r="2.65"/><circle cx="399.74" cy="490.56" r="2.65"/><circle cx="410.58" cy="490.56" r="2.65"/><circle cx="421.42" cy="490.56" r="2.65"/><circle cx="432.26" cy="532.92" r="2.65"/><circle cx="443.10" cy="490.56" r="2.65"/><circle cx="453.94" cy="429.57" r="2.65"/><circle cx="464.78" cy="443.13" r="2.65"/><circle cx="475.62" cy="402.47" r="2.65"/><circle cx="486.46" cy="402.47" r="2.65"/><circle cx="497.30" cy="490.56" r="2.65"/><circle cx="508.14" cy="468.54" r="2.65"/><circle cx="518.98" cy="454.99" r="2.65"/><circle cx="529.82" cy="443.13" r="2.65"/><circle cx="540.66" cy="416.02" r="2.65"/><circle cx="551.50" cy="390.61" r="2.65"/><circle cx="562.34" cy="363.50" r="2.65"/><circle cx="573.18" cy="490.56" r="2.65"/><circle cx="584.02" cy="482.09" r="2.65"/><circle cx="594.86" cy="416.02" r="2.65"/><circle cx="605.70" cy="363.50" r="2.65"/><circle cx="616.54" cy="490.56" r="2.65"/><circle cx="627.38" cy="490.56" r="2.65"/><circle cx="638.22" cy="532.92" r="2.65"/><circle cx="649.06" cy="532.92" r="2.65"/><circle cx="659.90" cy="532.92" r="2.65"/><circle cx="670.74" cy="532.92" r="2.65"/><circle cx="681.58" cy="532.92" r="2.65"/><circle cx="692.42" cy="482.09" r="2.65"/><circle cx="703.26" cy="482.09" r="2.65"/><circle cx="714.10" cy="490.56" r="2.65"/><circle cx="724.94" cy="490.56" r="2.65"/><circle cx="735.78" cy="490.56" r="2.65"/><circle cx="746.62" cy="482.09" r="2.65"/><circle cx="757.46" cy="490.56" r="2.65"/><circle cx="768.30" cy="532.92" r="2.65"/><circle cx="779.14" cy="532.92" r="2.65"/><circle cx="789.98" cy="532.92" r="2.65"/><circle cx="800.82" cy="490.56" r="2.65"/><circle cx="811.66" cy="532.92" r="2.65"/><circle cx="822.50" cy="490.56" r="2.65"/><circle cx="833.34" cy="490.56" r="2.65"/><circle cx="844.18" cy="532.92" r="2.65"/><circle cx="855.02" cy="490.56" r="2.65"/><circle cx="865.86" cy="490.56" r="2.65"/><circle cx="876.70" cy="490.56" r="2.65"/><circle cx="887.54" cy="490.56" r="2.65"/><circle cx="898.38" cy="490.56" r="2.65"/><circle cx="909.22" cy="490.56" r="2.65"/><circle cx="920.06" cy="490.56" r="2.65"/><circle cx="930.90" cy="490.56" r="2.65"/><circle cx="941.74" cy="490.56" r="2.65"/><circle cx="952.58" cy="490.56" r="2.65"/><circle cx="963.42" cy="490.56" r="2.65"/></g>
<polyline points="63.70,537.76 74.54,537.76 85.38,537.76 96.22,537.76 107.06,537.76 117.90,537.76 128.74,537.76 139.58,537.76 150.42,537.76 161.26,537.76 172.10,537.76 182.94,537.76 193.78,537.76 204.62,537.76 215.46,537.76 226.30,537.76 237.14,537.76 247.98,537.76 258.82,537.76 269.66,537.76 280.50,537.76 291.34,537.76 302.18,537.76 313.02,537.76 323.86,537.76 334.70,537.76 345.54,537.76 356.38,537.76 367.22,537.76 378.06,537.76 388.90,537.76 399.74,537.76 410.58,537.76 421.42,537.76 432.26,537.76 443.10,537.76 453.94,537.76 464.78,537.76 475.62,552.28 486.46,552.28 497.30,552.28 508.14,523.24 518.98,494.19 529.82,472.41 540.66,443.37 551.50,378.02 562.34,363.50 573.18,552.28 584.02,494.19 594.86,436.11 605.70,363.50 616.54,566.80 627.38,566.80 638.22,566.80 649.06,566.80 659.90,566.80 670.74,566.80 681.58,566.80 692.42,566.80 703.26,566.80 714.10,566.80 724.94,523.24 735.78,552.28 746.62,552.28 757.46,552.28 768.30,552.28 779.14,552.28 789.98,552.28 800.82,552.28 811.66,552.28 822.50,552.28 833.34,552.28 844.18,552.28 855.02,552.28 865.86,552.28 876.70,552.28 887.54,552.28 898.38,552.28 909.22,552.28 920.06,552.28 930.90,552.28 941.74,552.28 952.58,552.28 963.42,552.28" fill="none" stroke="#ffb300" stroke-width="2.45" stroke-linejoin="miter" stroke-miterlimit="10"/>
<g fill="#ffb300"><circle cx="63.70" cy="537.76" r="2.65"/><circle cx="74.54" cy="537.76" r="2.65"/><circle cx="85.38" cy="537.76" r="2.65"/><circle cx="96.22" cy="537.76" r="2.65"/><circle cx="107.06" cy="537.76" r="2.65"/><circle cx="117.90" cy="537.76" r="2.65"/><circle cx="128.74" cy="537.76" r="2.65"/><circle cx="139.58" cy="537.76" r="2.65"/><circle cx="150.42" cy="537.76" r="2.65"/><circle cx="161.26" cy="537.76" r="2.65"/><circle cx="172.10" cy="537.76" r="2.65"/><circle cx="182.94" cy="537.76" r="2.65"/><circle cx="193.78" cy="537.76" r="2.65"/><circle cx="204.62" cy="537.76" r="2.65"/><circle cx="215.46" cy="537.76" r="2.65"/><circle cx="226.30" cy="537.76" r="2.65"/><circle cx="237.14" cy="537.76" r="2.65"/><circle cx="247.98" cy="537.76" r="2.65"/><circle cx="258.82" cy="537.76" r="2.65"/><circle cx="269.66" cy="537.76" r="2.65"/><circle cx="280.50" cy="537.76" r="2.65"/><circle cx="291.34" cy="537.76" r="2.65"/><circle cx="302.18" cy="537.76" r="2.65"/><circle cx="313.02" cy="537.76" r="2.65"/><circle cx="323.86" cy="537.76" r="2.65"/><circle cx="334.70" cy="537.76" r="2.65"/><circle cx="345.54" cy="537.76" r="2.65"/><circle cx="356.38" cy="537.76" r="2.65"/><circle cx="367.22" cy="537.76" r="2.65"/><circle cx="378.06" cy="537.76" r="2.65"/><circle cx="388.90" cy="537.76" r="2.65"/><circle cx="399.74" cy="537.76" r="2.65"/><circle cx="410.58" cy="537.76" r="2.65"/><circle cx="421.42" cy="537.76" r="2.65"/><circle cx="432.26" cy="537.76" r="2.65"/><circle cx="443.10" cy="537.76" r="2.65"/><circle cx="453.94" cy="537.76" r="2.65"/><circle cx="464.78" cy="537.76" r="2.65"/><circle cx="475.62" cy="552.28" r="2.65"/><circle cx="486.46" cy="552.28" r="2.65"/><circle cx="497.30" cy="552.28" r="2.65"/><circle cx="508.14" cy="523.24" r="2.65"/><circle cx="518.98" cy="494.19" r="2.65"/><circle cx="529.82" cy="472.41" r="2.65"/><circle cx="540.66" cy="443.37" r="2.65"/><circle cx="551.50" cy="378.02" r="2.65"/><circle cx="562.34" cy="363.50" r="2.65"/><circle cx="573.18" cy="552.28" r="2.65"/><circle cx="584.02" cy="494.19" r="2.65"/><circle cx="594.86" cy="436.11" r="2.65"/><circle cx="605.70" cy="363.50" r="2.65"/><circle cx="616.54" cy="566.80" r="2.65"/><circle cx="627.38" cy="566.80" r="2.65"/><circle cx="638.22" cy="566.80" r="2.65"/><circle cx="649.06" cy="566.80" r="2.65"/><circle cx="659.90" cy="566.80" r="2.65"/><circle cx="670.74" cy="566.80" r="2.65"/><circle cx="681.58" cy="566.80" r="2.65"/><circle cx="692.42" cy="566.80" r="2.65"/><circle cx="703.26" cy="566.80" r="2.65"/><circle cx="714.10" cy="566.80" r="2.65"/><circle cx="724.94" cy="523.24" r="2.65"/><circle cx="735.78" cy="552.28" r="2.65"/><circle cx="746.62" cy="552.28" r="2.65"/><circle cx="757.46" cy="552.28" r="2.65"/><circle cx="768.30" cy="552.28" r="2.65"/><circle cx="779.14" cy="552.28" r="2.65"/><circle cx="789.98" cy="552.28" r="2.65"/><circle cx="800.82" cy="552.28" r="2.65"/><circle cx="811.66" cy="552.28" r="2.65"/><circle cx="822.50" cy="552.28" r="2.65"/><circle cx="833.34" cy="552.28" r="2.65"/><circle cx="844.18" cy="552.28" r="2.65"/><circle cx="855.02" cy="552.28" r="2.65"/><circle cx="865.86" cy="552.28" r="2.65"/><circle cx="876.70" cy="552.28" r="2.65"/><circle cx="887.54" cy="552.28" r="2.65"/><circle cx="898.38" cy="552.28" r="2.65"/><circle cx="909.22" cy="552.28" r="2.65"/><circle cx="920.06" cy="552.28" r="2.65"/><circle cx="930.90" cy="552.28" r="2.65"/><circle cx="941.74" cy="552.28" r="2.65"/><circle cx="952.58" cy="552.28" r="2.65"/><circle cx="963.42" cy="552.28" r="2.65"/></g>
<polyline points="63.70,448.21 74.54,448.21 85.38,448.21 96.22,448.21 107.06,448.21 117.90,448.21 128.74,448.21 139.58,448.21 150.42,448.21 161.26,448.21 172.10,448.21 182.94,466.84 193.78,466.84 204.62,463.46 215.46,463.46 226.30,463.46 237.14,463.46 247.98,463.46 258.82,463.46 269.66,463.46 280.50,463.46 291.34,463.46 302.18,463.46 313.02,463.46 323.86,463.46 334.70,463.46 345.54,463.46 356.38,463.46 367.22,463.46 378.06,463.46 388.90,463.46 399.74,463.46 410.58,463.46 421.42,463.46 432.26,454.99 443.10,454.99 453.94,463.46 464.78,456.68 475.62,456.68 486.46,456.68 497.30,456.68 508.14,456.68 518.98,456.68 529.82,456.68 540.66,456.68 551.50,456.68 562.34,456.68 573.18,454.99 584.02,454.99 594.86,454.99 605.70,454.99 616.54,454.99 627.38,454.99 638.22,454.99 649.06,454.99 659.90,454.99 670.74,454.99 681.58,454.99 692.42,454.99 703.26,454.99 714.10,454.99 724.94,454.99 735.78,453.29 746.62,453.29 757.46,458.37 768.30,458.37 779.14,458.37 789.98,458.37 800.82,458.37 811.66,458.37 822.50,458.37 833.34,453.29 844.18,453.29 855.02,453.29 865.86,453.29 876.70,453.29 887.54,453.29 898.38,453.29 909.22,453.29 920.06,453.29 930.90,453.29 941.74,453.29 952.58,453.29 963.42,453.29" fill="none" stroke="#81c784" stroke-width="2.45" stroke-linejoin="miter" stroke-miterlimit="10"/>
<g fill="#81c784"><circle cx="63.70" cy="448.21" r="2.65"/><circle cx="74.54" cy="448.21" r="2.65"/><circle cx="85.38" cy="448.21" r="2.65"/><circle cx="96.22" cy="448.21" r="2.65"/><circle cx="107.06" cy="448.21" r="2.65"/><circle cx="117.90" cy="448.21" r="2.65"/><circle cx="128.74" cy="448.21" r="2.65"/><circle cx="139.58" cy="448.21" r="2.65"/><circle cx="150.42" cy="448.21" r="2.65"/><circle cx="161.26" cy="448.21" r="2.65"/><circle cx="172.10" cy="448.21" r="2.65"/><circle cx="182.94" cy="466.84" r="2.65"/><circle cx="193.78" cy="466.84" r="2.65"/><circle cx="204.62" cy="463.46" r="2.65"/><circle cx="215.46" cy="463.46" r="2.65"/><circle cx="226.30" cy="463.46" r="2.65"/><circle cx="237.14" cy="463.46" r="2.65"/><circle cx="247.98" cy="463.46" r="2.65"/><circle cx="258.82" cy="463.46" r="2.65"/><circle cx="269.66" cy="463.46" r="2.65"/><circle cx="280.50" cy="463.46" r="2.65"/><circle cx="291.34" cy="463.46" r="2.65"/><circle cx="302.18" cy="463.46" r="2.65"/><circle cx="313.02" cy="463.46" r="2.65"/><circle cx="323.86" cy="463.46" r="2.65"/><circle cx="334.70" cy="463.46" r="2.65"/><circle cx="345.54" cy="463.46" r="2.65"/><circle cx="356.38" cy="463.46" r="2.65"/><circle cx="367.22" cy="463.46" r="2.65"/><circle cx="378.06" cy="463.46" r="2.65"/><circle cx="388.90" cy="463.46" r="2.65"/><circle cx="399.74" cy="463.46" r="2.65"/><circle cx="410.58" cy="463.46" r="2.65"/><circle cx="421.42" cy="463.46" r="2.65"/><circle cx="432.26" cy="454.99" r="2.65"/><circle cx="443.10" cy="454.99" r="2.65"/><circle cx="453.94" cy="463.46" r="2.65"/><circle cx="464.78" cy="456.68" r="2.65"/><circle cx="475.62" cy="456.68" r="2.65"/><circle cx="486.46" cy="456.68" r="2.65"/><circle cx="497.30" cy="456.68" r="2.65"/><circle cx="508.14" cy="456.68" r="2.65"/><circle cx="518.98" cy="456.68" r="2.65"/><circle cx="529.82" cy="456.68" r="2.65"/><circle cx="540.66" cy="456.68" r="2.65"/><circle cx="551.50" cy="456.68" r="2.65"/><circle cx="562.34" cy="456.68" r="2.65"/><circle cx="573.18" cy="454.99" r="2.65"/><circle cx="584.02" cy="454.99" r="2.65"/><circle cx="594.86" cy="454.99" r="2.65"/><circle cx="605.70" cy="454.99" r="2.65"/><circle cx="616.54" cy="454.99" r="2.65"/><circle cx="627.38" cy="454.99" r="2.65"/><circle cx="638.22" cy="454.99" r="2.65"/><circle cx="649.06" cy="454.99" r="2.65"/><circle cx="659.90" cy="454.99" r="2.65"/><circle cx="670.74" cy="454.99" r="2.65"/><circle cx="681.58" cy="454.99" r="2.65"/><circle cx="692.42" cy="454.99" r="2.65"/><circle cx="703.26" cy="454.99" r="2.65"/><circle cx="714.10" cy="454.99" r="2.65"/><circle cx="724.94" cy="454.99" r="2.65"/><circle cx="735.78" cy="453.29" r="2.65"/><circle cx="746.62" cy="453.29" r="2.65"/><circle cx="757.46" cy="458.37" r="2.65"/><circle cx="768.30" cy="458.37" r="2.65"/><circle cx="779.14" cy="458.37" r="2.65"/><circle cx="789.98" cy="458.37" r="2.65"/><circle cx="800.82" cy="458.37" r="2.65"/><circle cx="811.66" cy="458.37" r="2.65"/><circle cx="822.50" cy="458.37" r="2.65"/><circle cx="833.34" cy="453.29" r="2.65"/><circle cx="844.18" cy="453.29" r="2.65"/><circle cx="855.02" cy="453.29" r="2.65"/><circle cx="865.86" cy="453.29" r="2.65"/><circle cx="876.70" cy="453.29" r="2.65"/><circle cx="887.54" cy="453.29" r="2.65"/><circle cx="898.38" cy="453.29" r="2.65"/><circle cx="909.22" cy="453.29" r="2.65"/><circle cx="920.06" cy="453.29" r="2.65"/><circle cx="930.90" cy="453.29" r="2.65"/><circle cx="941.74" cy="453.29" r="2.65"/><circle cx="952.58" cy="453.29" r="2.65"/><circle cx="963.42" cy="453.29" r="2.65"/></g>
<polyline points="63.70,507.50 74.54,507.50 85.38,507.50 96.22,507.50 107.06,507.50 117.90,507.50 128.74,507.50 139.58,507.50 150.42,507.50 161.26,512.59 172.10,522.75 182.94,539.69 193.78,539.69 204.62,539.69 215.46,510.89 226.30,527.83 237.14,539.69 247.98,519.36 258.82,519.36 269.66,519.36 280.50,519.36 291.34,519.36 302.18,519.36 313.02,519.36 323.86,519.36 334.70,519.36 345.54,519.36 356.38,519.36 367.22,519.36 378.06,527.83 388.90,527.83 399.74,524.45 410.58,524.45 421.42,531.22 432.26,531.22 443.10,539.69 453.94,539.69 464.78,539.69 475.62,524.45 486.46,524.45 497.30,524.45 508.14,524.45 518.98,524.45 529.82,524.45 540.66,524.45 551.50,524.45 562.34,524.45 573.18,527.83 584.02,527.83 594.86,527.83 605.70,527.83 616.54,524.45 627.38,524.45 638.22,524.45 649.06,524.45 659.90,524.45 670.74,524.45 681.58,524.45 692.42,524.45 703.26,524.45 714.10,524.45 724.94,524.45 735.78,529.53 746.62,524.45 757.46,558.33 768.30,558.33 779.14,558.33 789.98,558.33 800.82,558.33 811.66,560.02 822.50,558.33 833.34,558.33 844.18,558.33 855.02,558.33 865.86,558.33 876.70,558.33 887.54,558.33 898.38,558.33 909.22,558.33 920.06,558.33 930.90,558.33 941.74,558.33 952.58,558.33 963.42,548.16" fill="none" stroke="#1976d2" stroke-width="2.45" stroke-linejoin="miter" stroke-miterlimit="10"/>
<g fill="#1976d2"><circle cx="63.70" cy="507.50" r="2.65"/><circle cx="74.54" cy="507.50" r="2.65"/><circle cx="85.38" cy="507.50" r="2.65"/><circle cx="96.22" cy="507.50" r="2.65"/><circle cx="107.06" cy="507.50" r="2.65"/><circle cx="117.90" cy="507.50" r="2.65"/><circle cx="128.74" cy="507.50" r="2.65"/><circle cx="139.58" cy="507.50" r="2.65"/><circle cx="150.42" cy="507.50" r="2.65"/><circle cx="161.26" cy="512.59" r="2.65"/><circle cx="172.10" cy="522.75" r="2.65"/><circle cx="182.94" cy="539.69" r="2.65"/><circle cx="193.78" cy="539.69" r="2.65"/><circle cx="204.62" cy="539.69" r="2.65"/><circle cx="215.46" cy="510.89" r="2.65"/><circle cx="226.30" cy="527.83" r="2.65"/><circle cx="237.14" cy="539.69" r="2.65"/><circle cx="247.98" cy="519.36" r="2.65"/><circle cx="258.82" cy="519.36" r="2.65"/><circle cx="269.66" cy="519.36" r="2.65"/><circle cx="280.50" cy="519.36" r="2.65"/><circle cx="291.34" cy="519.36" r="2.65"/><circle cx="302.18" cy="519.36" r="2.65"/><circle cx="313.02" cy="519.36" r="2.65"/><circle cx="323.86" cy="519.36" r="2.65"/><circle cx="334.70" cy="519.36" r="2.65"/><circle cx="345.54" cy="519.36" r="2.65"/><circle cx="356.38" cy="519.36" r="2.65"/><circle cx="367.22" cy="519.36" r="2.65"/><circle cx="378.06" cy="527.83" r="2.65"/><circle cx="388.90" cy="527.83" r="2.65"/><circle cx="399.74" cy="524.45" r="2.65"/><circle cx="410.58" cy="524.45" r="2.65"/><circle cx="421.42" cy="531.22" r="2.65"/><circle cx="432.26" cy="531.22" r="2.65"/><circle cx="443.10" cy="539.69" r="2.65"/><circle cx="453.94" cy="539.69" r="2.65"/><circle cx="464.78" cy="539.69" r="2.65"/><circle cx="475.62" cy="524.45" r="2.65"/><circle cx="486.46" cy="524.45" r="2.65"/><circle cx="497.30" cy="524.45" r="2.65"/><circle cx="508.14" cy="524.45" r="2.65"/><circle cx="518.98" cy="524.45" r="2.65"/><circle cx="529.82" cy="524.45" r="2.65"/><circle cx="540.66" cy="524.45" r="2.65"/><circle cx="551.50" cy="524.45" r="2.65"/><circle cx="562.34" cy="524.45" r="2.65"/><circle cx="573.18" cy="527.83" r="2.65"/><circle cx="584.02" cy="527.83" r="2.65"/><circle cx="594.86" cy="527.83" r="2.65"/><circle cx="605.70" cy="527.83" r="2.65"/><circle cx="616.54" cy="524.45" r="2.65"/><circle cx="627.38" cy="524.45" r="2.65"/><circle cx="638.22" cy="524.45" r="2.65"/><circle cx="649.06" cy="524.45" r="2.65"/><circle cx="659.90" cy="524.45" r="2.65"/><circle cx="670.74" cy="524.45" r="2.65"/><circle cx="681.58" cy="524.45" r="2.65"/><circle cx="692.42" cy="524.45" r="2.65"/><circle cx="703.26" cy="524.45" r="2.65"/><circle cx="714.10" cy="524.45" r="2.65"/><circle cx="724.94" cy="524.45" r="2.65"/><circle cx="735.78" cy="529.53" r="2.65"/><circle cx="746.62" cy="524.45" r="2.65"/><circle cx="757.46" cy="558.33" r="2.65"/><circle cx="768.30" cy="558.33" r="2.65"/><circle cx="779.14" cy="558.33" r="2.65"/><circle cx="789.98" cy="558.33" r="2.65"/><circle cx="800.82" cy="558.33" r="2.65"/><circle cx="811.66" cy="560.02" r="2.65"/><circle cx="822.50" cy="558.33" r="2.65"/><circle cx="833.34" cy="558.33" r="2.65"/><circle cx="844.18" cy="558.33" r="2.65"/><circle cx="855.02" cy="558.33" r="2.65"/><circle cx="865.86" cy="558.33" r="2.65"/><circle cx="876.70" cy="558.33" r="2.65"/><circle cx="887.54" cy="558.33" r="2.65"/><circle cx="898.38" cy="558.33" r="2.65"/><circle cx="909.22" cy="558.33" r="2.65"/><circle cx="920.06" cy="558.33" r="2.65"/><circle cx="930.90" cy="558.33" r="2.65"/><circle cx="941.74" cy="558.33" r="2.65"/><circle cx="952.58" cy="558.33" r="2.65"/><circle cx="963.42" cy="548.16" r="2.65"/></g>
<polyline points="63.70,497.34 74.54,497.34 85.38,497.34 96.22,497.34 107.06,497.34 117.90,497.34 128.74,497.34 139.58,497.34 150.42,497.34 161.26,497.34 172.10,497.34 182.94,497.34 193.78,497.34 204.62,497.34 215.46,497.34 226.30,497.34 237.14,497.34 247.98,497.34 258.82,497.34 269.66,497.34 280.50,497.34 291.34,497.34 302.18,497.34 313.02,497.34 323.86,497.34 334.70,497.34 345.54,497.34 356.38,497.34 367.22,497.34 378.06,497.34 388.90,497.34 399.74,497.34 410.58,497.34 421.42,497.34 432.26,497.34 443.10,497.34 453.94,497.34 464.78,497.34 475.62,497.34 486.46,497.34 497.30,497.34 508.14,497.34 518.98,497.34 529.82,497.34 540.66,497.34 551.50,497.34 562.34,497.34 573.18,497.34 584.02,497.34 594.86,497.34 605.70,497.34 616.54,497.34 627.38,497.34 638.22,497.34 649.06,497.34 659.90,497.34 670.74,497.34 681.58,497.34 692.42,497.34 703.26,497.34 714.10,497.34 724.94,497.34 735.78,497.34 746.62,497.34 757.46,497.34 768.30,497.34 779.14,497.34 789.98,497.34 800.82,497.34 811.66,497.34 822.50,497.34 833.34,497.34 844.18,497.34 855.02,497.34 865.86,497.34 876.70,497.34 887.54,497.34 898.38,497.34 909.22,497.34 920.06,497.34 930.90,497.34 941.74,497.34 952.58,497.34 963.42,497.34" fill="none" stroke="#ff5722" stroke-width="2.45" stroke-linejoin="miter" stroke-miterlimit="10"/>
<g fill="#ff5722"><circle cx="63.70" cy="497.34" r="2.65"/><circle cx="74.54" cy="497.34" r="2.65"/><circle cx="85.38" cy="497.34" r="2.65"/><circle cx="96.22" cy="497.34" r="2.65"/><circle cx="107.06" cy="497.34" r="2.65"/><circle cx="117.90" cy="497.34" r="2.65"/><circle cx="128.74" cy="497.34" r="2.65"/><circle cx="139.58" cy="497.34" r="2.65"/><circle cx="150.42" cy="497.34" r="2.65"/><circle cx="161.26" cy="497.34" r="2.65"/><circle cx="172.10" cy="497.34" r="2.65"/><circle cx="182.94" cy="497.34" r="2.65"/><circle cx="193.78" cy="497.34" r="2.65"/><circle cx="204.62" cy="497.34" r="2.65"/><circle cx="215.46" cy="497.34" r="2.65"/><circle cx="226.30" cy="497.34" r="2.65"/><circle cx="237.14" cy="497.34" r="2.65"/><circle cx="247.98" cy="497.34" r="2.65"/><circle cx="258.82" cy="497.34" r="2.65"/><circle cx="269.66" cy="497.34" r="2.65"/><circle cx="280.50" cy="497.34" r="2.65"/><circle cx="291.34" cy="497.34" r="2.65"/><circle cx="302.18" cy="497.34" r="2.65"/><circle cx="313.02" cy="497.34" r="2.65"/><circle cx="323.86" cy="497.34" r="2.65"/><circle cx="334.70" cy="497.34" r="2.65"/><circle cx="345.54" cy="497.34" r="2.65"/><circle cx="356.38" cy="497.34" r="2.65"/><circle cx="367.22" cy="497.34" r="2.65"/><circle cx="378.06" cy="497.34" r="2.65"/><circle cx="388.90" cy="497.34" r="2.65"/><circle cx="399.74" cy="497.34" r="2.65"/><circle cx="410.58" cy="497.34" r="2.65"/><circle cx="421.42" cy="497.34" r="2.65"/><circle cx="432.26" cy="497.34" r="2.65"/><circle cx="443.10" cy="497.34" r="2.65"/><circle cx="453.94" cy="497.34" r="2.65"/><circle cx="464.78" cy="497.34" r="2.65"/><circle cx="475.62" cy="497.34" r="2.65"/><circle cx="486.46" cy="497.34" r="2.65"/><circle cx="497.30" cy="497.34" r="2.65"/><circle cx="508.14" cy="497.34" r="2.65"/><circle cx="518.98" cy="497.34" r="2.65"/><circle cx="529.82" cy="497.34" r="2.65"/><circle cx="540.66" cy="497.34" r="2.65"/><circle cx="551.50" cy="497.34" r="2.65"/><circle cx="562.34" cy="497.34" r="2.65"/><circle cx="573.18" cy="497.34" r="2.65"/><circle cx="584.02" cy="497.34" r="2.65"/><circle cx="594.86" cy="497.34" r="2.65"/><circle cx="605.70" cy="497.34" r="2.65"/><circle cx="616.54" cy="497.34" r="2.65"/><circle cx="627.38" cy="497.34" r="2.65"/><circle cx="638.22" cy="497.34" r="2.65"/><circle cx="649.06" cy="497.34" r="2.65"/><circle cx="659.90" cy="497.34" r="2.65"/><circle cx="670.74" cy="497.34" r="2.65"/><circle cx="681.58" cy="497.34" r="2.65"/><circle cx="692.42" cy="497.34" r="2.65"/><circle cx="703.26" cy="497.34" r="2.65"/><circle cx="714.10" cy="497.34" r="2.65"/><circle cx="724.94" cy="497.34" r="2.65"/><circle cx="735.78" cy="497.34" r="2.65"/><circle cx="746.62" cy="497.34" r="2.65"/><circle cx="757.46" cy="497.34" r="2.65"/><circle cx="768.30" cy="497.34" r="2.65"/><circle cx="779.14" cy="497.34" r="2.65"/><circle cx="789.98" cy="497.34" r="2.65"/><circle cx="800.82" cy="497.34" r="2.65"/><circle cx="811.66" cy="497.34" r="2.65"/><circle cx="822.50" cy="497.34" r="2.65"/><circle cx="833.34" cy="497.34" r="2.65"/><circle cx="844.18" cy="497.34" r="2.65"/><circle cx="855.02" cy="497.34" r="2.65"/><circle cx="865.86" cy="497.34" r="2.65"/><circle cx="876.70" cy="497.34" r="2.65"/><circle cx="887.54" cy="497.34" r="2.65"/><circle cx="898.38" cy="497.34" r="2.65"/><circle cx="909.22" cy="497.34" r="2.65"/><circle cx="920.06" cy="497.34" r="2.65"/><circle cx="930.90" cy="497.34" r="2.65"/><circle cx="941.74" cy="497.34" r="2.65"/><circle cx="952.58" cy="497.34" r="2.65"/><circle cx="963.42" cy="497.34" r="2.65"/></g>
</g>
<rect x="356.4" y="346.3" width="30.8" height="10" fill="#ff5722"/>
<text x="391.3" y="354.4" font-size="8.8" fill="#666">TIN</text>
<rect x="410.7" y="346.3" width="30.8" height="10" fill="#1976d2"/>
<text x="444.9" y="354.4" font-size="8.8" fill="#666">TOUT</text>
<rect x="474.0" y="346.3" width="30.8" height="10" fill="#81c784"/>
<text x="508.5" y="354.4" font-size="8.8" fill="#666">RH in</text>
<rect x="535.8" y="346.3" width="30.8" height="10" fill="#ffb300"/>
<text x="570.7" y="354.4" font-size="8.8" fill="#666">CO2</text>
<rect x="593.9" y="346.3" width="30.8" height="10" fill="#9c479f"/>
<text x="628.4" y="354.4" font-size="8.8" fill="#666">INT VENT</text>
</svg>
</body></html>
